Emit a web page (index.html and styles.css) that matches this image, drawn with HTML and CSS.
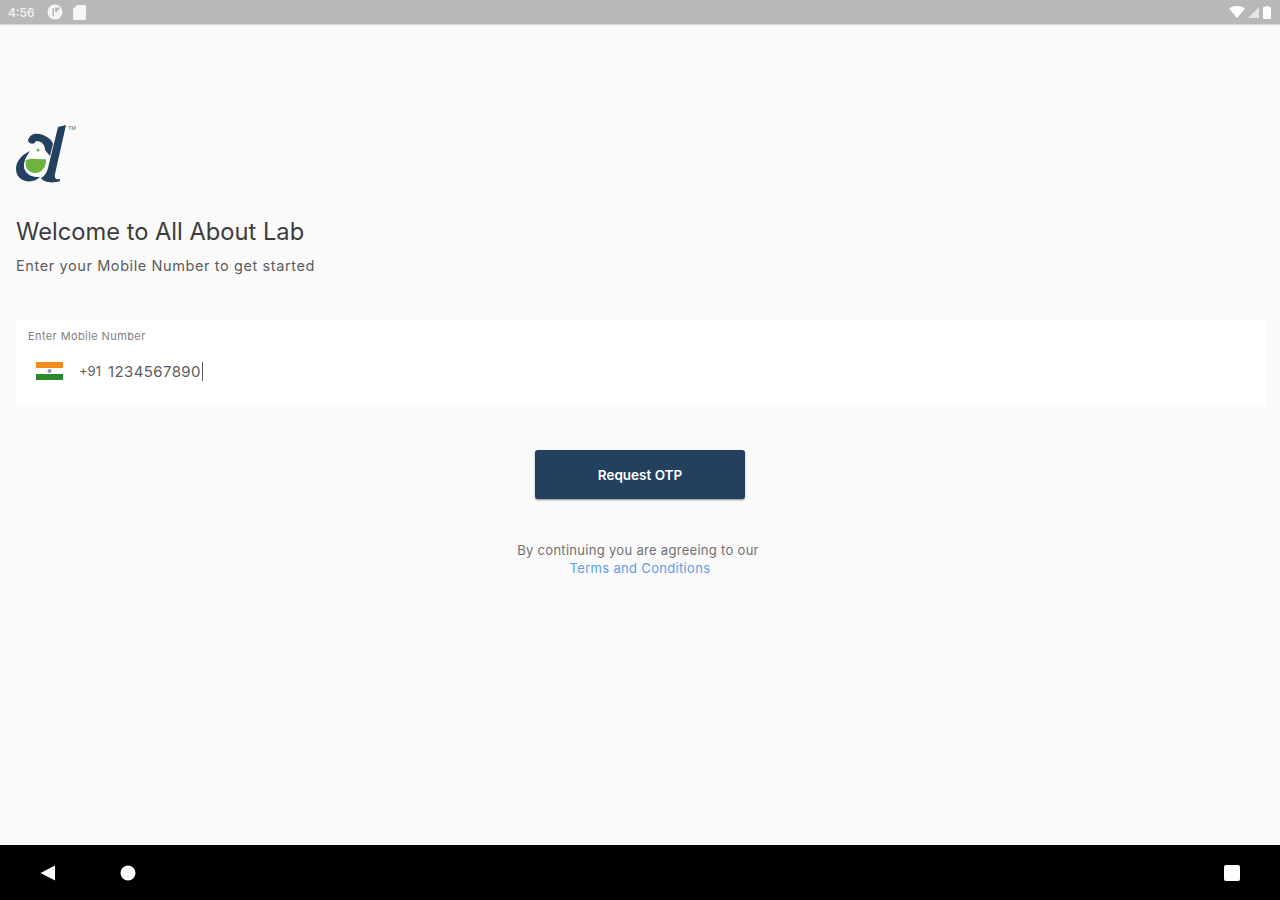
FILE: index.html
```html
<!DOCTYPE html>
<html lang="en">
<head>
    <meta charset="UTF-8">
    <meta name="viewport" content="width=device-width, initial-scale=1.0">
    <title>All About Lab</title>
    <link rel="stylesheet" href="styles.css">
</head>
<body>

<div class="screen">
    <div class="status-bar">
        <div class="status-left">
            <span class="clock">4:56</span>
            <svg width="16" height="16" viewBox="0 0 16 16"><circle cx="8" cy="8" r="7.500" fill="#f6f6f6"/><path d="M8 8V3.500h4.500V6H10.500v2z" fill="#b8b8b8"/><path d="M5.500 12.500V4H7v8.500z" fill="#b8b8b8"/></svg>
            <svg class="sd-icon" width="13" height="15" viewBox="0 0 13 15"><path d="M4 0h8a1 1 0 0 1 1 1v13a1 1 0 0 1-1 1H1a1 1 0 0 1-1-1V4z" fill="#f6f6f6"/></svg>
        </div>
        <div class="status-right">
            <svg width="16" height="12" viewBox="0 0 16 12"><path d="M0 2.500C4.500-.8 11.500-.8 16 2.500L8 12z" fill="#fff"/></svg>
            <svg width="12" height="12" viewBox="0 0 12 12"><path d="M11 1v11H0z" fill="#e4e4e4"/></svg>
            <svg width="8" height="13" viewBox="0 0 8 13"><path d="M2.500 0h3v1H7a1 1 0 0 1 1 1v10a1 1 0 0 1-1 1H1a1 1 0 0 1-1-1V2a1 1 0 0 1 1-1h1.500z" fill="#fff"/></svg>
        </div>
    </div>

    <div class="content">
        <div class="logo">
            <svg width="60" height="62" viewBox="0 0 60 62">
                <path d="M14 27C5 31 0 38 0 45c0 10 10 15 20 11l4-3C14 54 7 48 8 40c1-6 4-10 6-13z" fill="#24405f"/>
                <path d="M12 17c1-7 8-9 15-6 5 2 9 5 10 9l-3 12-5-6c0-6-4-9-9-9-1 3-6 4-8 0z" fill="#24405f"/>
                <path d="M20 22h5l1 7c5 2 7 7 6 12-1 8-8 13-15 11-7-2-10-9-8-15 1-4 4-7 10-8z" fill="#fff"/>
                <circle cx="22" cy="26" r="1.500" fill="#6cb33f"/>
                <path d="M10 36c7-3 13 0 20-1 1 8-5 15-12 14-6-1-10-7-8-13z" fill="#6cb33f"/>
                <path d="M42 3l8-2-11 49c-1 4 1 6 5 5v2c-8 3-17 1-19-3 4-2 6-6 7-10z" fill="#24405f"/>
                <text x="52" y="6" class="tm">TM</text>
            </svg>
        </div>

        <h1 class="title">Welcome to All About Lab</h1>
        <p class="subtitle">Enter your Mobile Number to get started</p>

        <div class="phone-field">
            <label class="phone-label" for="mobile">Enter Mobile Number</label>
            <div class="phone-row">
                <svg class="flag" width="27" height="18" viewBox="0 0 27 18">
                    <rect width="27" height="6" fill="#f28a1e"/>
                    <rect y="6" width="27" height="6" fill="#fff"/>
                    <rect y="12" width="27" height="6" fill="#2c8a2e"/>
                    <circle cx="13.500" cy="9" r="2" fill="#8d93c4"/>
                </svg>
                <span class="dial-code">+91</span>
                <span class="phone-number" id="mobile">1234567890</span>
            </div>
        </div>

        <button class="otp-button">Request OTP</button>

        <div class="terms">
            <div class="terms-text">By continuing you are agreeing to our</div>
            <a class="terms-link" href="#">Terms and Conditions</a>
        </div>
    </div>

    <div class="nav-bar">
        <div class="nav-left">
            <svg width="16" height="16" viewBox="0 0 16 16"><path d="M15 0.500V15.500L0.500 8z" fill="#fff"/></svg>
            <svg width="16" height="16" viewBox="0 0 16 16"><circle cx="8" cy="8" r="7.500" fill="#fff"/></svg>
        </div>
        <svg width="16" height="16" viewBox="0 0 16 16"><rect width="16" height="16" rx="2" fill="#fff"/></svg>
    </div>
</div>

</body>
</html>
```

FILE: styles.css
```css
* { box-sizing: border-box; }
body { margin: 0; font-family: Inter, "Noto Sans", sans-serif; background-color: #fafafa; }
.screen { display: flex; flex-direction: column; height: 900px; }

.status-bar { height: 24px; background-color: #b8b8b8; display: flex; justify-content: space-between; align-items: center; padding: 0 8px; box-shadow: 0 1px 1px #ddd; }
.status-left { display: flex; align-items: center; gap: 8px; }
.status-right { display: flex; align-items: center; gap: 3px; padding-right: 1px; }
.clock { color: #f4f4f4; font-size: 12px; font-weight: 500; width: 31px; }
.sd-icon { margin-left: 2px; }

.content { flex: 1; display: flex; flex-direction: column; padding: 100px 16px 0; }
.logo { height: 62px; }
.tm { font-size: 5px; fill: #666; }
.title { margin: 31px 0 0; font-size: 23.700px; line-height: 29px; font-weight: 400; color: #3d3d3d; }
.subtitle { margin: 10px 0 0; font-size: 14.500px; line-height: 20px; letter-spacing: 0.600px; color: #5c5c5c; }

.phone-field { margin: 44px -1px 0 0; height: 87px; background-color: #fff; padding: 9px 12px; }
.phone-label { display: block; font-size: 11px; line-height: 14px; letter-spacing: 0.400px; color: #808080; }
.phone-row { display: flex; align-items: center; margin-top: 18px; padding-left: 8px; height: 20px; color: #5c5c5c; font-size: 15px; }
.flag { margin-right: 16px; }
.dial-code { margin-right: 7px; font-size: 13px; }
.phone-number { padding-right: 1px; border-right: 1px solid #555; line-height: 19px; letter-spacing: 0.400px; }

.otp-button { align-self: center; width: 210px; height: 49px; margin-top: 43px; background-color: #24405f; color: white; font-family: inherit; font-size: 13.500px; font-weight: 600; border: none; border-radius: 3px; box-shadow: 0 1px 2px #888; cursor: pointer; }

.terms { margin-top: 42px; text-align: center; font-size: 13px; line-height: 18px; letter-spacing: 0.300px; color: #707070; }
.terms-text { padding-right: 4px; }
.terms-link { color: #5b9bf0; text-decoration: none; letter-spacing: 0.320px; }

.nav-bar { height: 55px; background-color: #000; display: flex; justify-content: space-between; align-items: center; padding: 0 40px; }
.nav-left { display: flex; gap: 64px; }
```
